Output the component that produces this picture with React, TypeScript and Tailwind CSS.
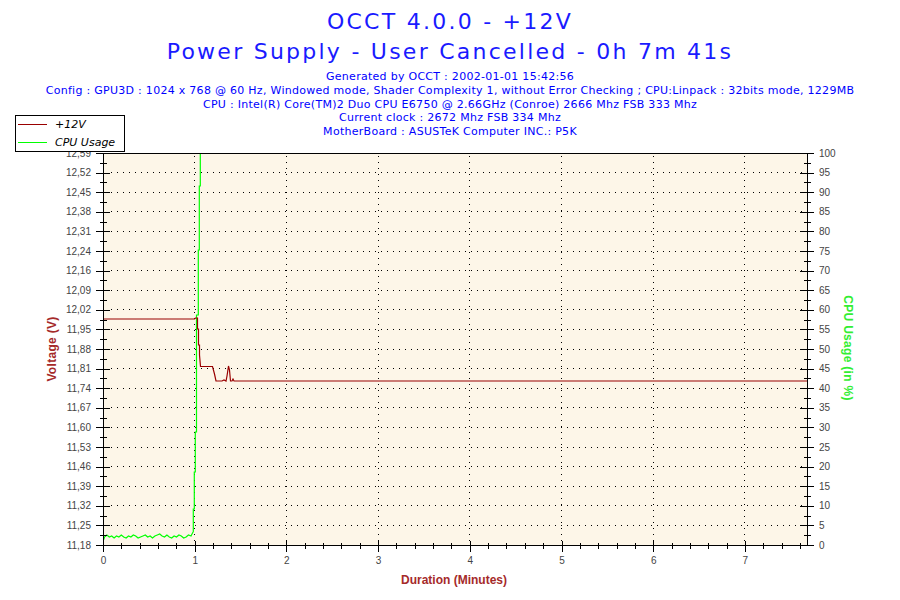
import React from "react";

// plot geometry (page pixels)
const X0 = 103;
const X1 = 807;
const Y0 = 545;
const Y1 = 153;
const MIN_PX = 91.7;
const STEP = 19.6;
const TOP = 143; // header height, svg starts here

const voltLabels = [
  "11,18", "11,25", "11,32", "11,39", "11,46", "11,53", "11,60", "11,67", "11,74", "11,81",
  "11,88", "11,95", "12,02", "12,09", "12,16", "12,24", "12,31", "12,38", "12,45", "12,52", "12,59",
];

const wiggle = [
  537, 535, 537, 536, 538, 536, 537, 535, 537, 538, 536, 537, 535, 536, 538, 537, 536, 535, 537, 536,
  538, 536, 535, 534, 536, 537, 535, 537, 538, 536, 537, 535, 536, 538, 537, 535,
];

const greenPts = (() => {
  const pts: [number, number][] = [[103.5, 540]];
  wiggle.forEach((y, i) => pts.push([104.5 + i * 2.4, y]));
  pts.push(
    [191, 536], [192.5, 533], [193.3, 531.7], [193.3, 509], [194.3, 509], [194.3, 472],
    [195.3, 472], [195.3, 432], [196.5, 432], [196.5, 315], [198.3, 315], [198.3, 250],
    [199.3, 250], [199.3, 186], [200.3, 186], [200.3, 153]
  );
  return pts;
})();

const redPts: [number, number][] = [
  [103, 319], [194.5, 319], [195.5, 318], [197.5, 318], [197.5, 329], [198.5, 329], [198.5, 345],
  [199.5, 345], [199.5, 355], [200.5, 366.5], [212.5, 366.5], [214.5, 374], [216, 381], [222, 381],
  [224, 380], [226, 381], [227, 376], [228.5, 366], [229.5, 370], [230.5, 381], [232, 381],
  [233, 379], [234, 381], [807, 381],
];

const toPath = (pts: [number, number][]) =>
  pts.map(([x, y], i) => `${i === 0 ? "M" : "L"}${x} ${y}`).join(" ");

const Chart = () => {
  const ks = Array.from({ length: 21 }, (_, k) => k);
  const mins = Array.from({ length: 8 }, (_, m) => m);
  const minorX = Array.from({ length: 39 }, (_, i) => i * 0.2).filter((v) => Math.abs(v - Math.round(v)) > 0.01);

  return (
    <svg width={900} height={600 - TOP} className="block" shapeRendering="crispEdges">
      <g transform={`translate(0,${-TOP})`}>
        <rect x={X0} y={Y1} width={X1 - X0} height={Y0 - Y1} fill="#fdf6e8" />

        {/* grid */}
        {ks.slice(1, 20).map((k) => (
          <line key={`h${k}`} x1={X0 + 8} x2={X1} y1={Y0 - k * STEP} y2={Y0 - k * STEP}
            stroke="#000" strokeDasharray="1 5" />
        ))}
        {mins.slice(1).map((m) => (
          <line key={`v${m}`} x1={X0 + m * MIN_PX} x2={X0 + m * MIN_PX} y1={Y1 + 3} y2={Y0}
            stroke="#000" strokeDasharray="1 5" />
        ))}

        {/* data */}
        <path d={toPath(greenPts)} fill="none" stroke="#00ff00" strokeWidth={1.2} shapeRendering="auto" />
        <path d={toPath(redPts)} fill="none" stroke="#990000" strokeWidth={1.2} shapeRendering="auto" />

        {/* frame */}
        <rect x={X0 + 0.5} y={Y1 + 0.5} width={X1 - X0} height={Y0 - Y1} fill="none" stroke="#000" />

        {/* y ticks */}
        {ks.map((k) => {
          const y = Y0 - k * STEP + 0.5;
          return (
            <g key={`t${k}`}>
              <line x1={96} x2={110} y1={y} y2={y} stroke="#000" />
              <line x1={X1 - 7} x2={X1 + 7} y1={y} y2={y} stroke="#000" />
              {k < 20 && (
                <>
                  <line x1={100} x2={107} y1={y - STEP / 2} y2={y - STEP / 2} stroke="#000" />
                  <line x1={X1 - 3} x2={X1 + 4} y1={y - STEP / 2} y2={y - STEP / 2} stroke="#000" />
                </>
              )}
              <text x={91} y={Y0 - k * STEP + 3.6} textAnchor="end" fill="#444"
                className="font-['Liberation_Sans',Arial,sans-serif] text-[10px]">
                {voltLabels[k]}
              </text>
              <text x={819} y={Y0 - k * STEP + 3.6} fill="#444"
                className="font-['Liberation_Sans',Arial,sans-serif] text-[10px]">
                {k * 5}
              </text>
            </g>
          );
        })}

        {/* x ticks */}
        {mins.map((m) => (
          <g key={`x${m}`}>
            <line x1={X0 + m * MIN_PX + 0.5} x2={X0 + m * MIN_PX + 0.5} y1={m === 0 ? Y0 : Y0 - 4} y2={Y0 + 7} stroke="#000" />
            <text x={X0 + m * MIN_PX + 0.5} y={564} textAnchor="middle" fill="#444"
              className="font-['Liberation_Sans',Arial,sans-serif] text-[10px]">
              {m}
            </text>
          </g>
        ))}
        {minorX.map((v) => (
          <line key={`mx${v}`} x1={X0 + v * MIN_PX + 0.5} x2={X0 + v * MIN_PX + 0.5} y1={Y0 - 2} y2={Y0 + 4} stroke="#000" />
        ))}

        {/* axis titles */}
        <text transform="translate(55.5,349) rotate(-90)" textAnchor="middle" fill="#a52a2a"
          className="font-['Liberation_Sans',Arial,sans-serif] text-[12px] font-bold tracking-[0.3px]">
          Voltage (V)
        </text>
        <text transform="translate(844,348) rotate(90)" textAnchor="middle" fill="#33ee33"
          className="font-['Liberation_Sans',Arial,sans-serif] text-[12px] font-bold tracking-[0.3px]">
          CPU Usage (in %)
        </text>
        <text x={454} y={584} textAnchor="middle" fill="#a52a2a"
          className="font-['Liberation_Sans',Arial,sans-serif] text-[12px] font-bold">
          Duration (Minutes)
        </text>
      </g>
    </svg>
  );
};

export default function App() {
  return (
    <div className="relative w-[900px] h-[600px] bg-white overflow-hidden font-['DejaVu_Sans',Verdana,sans-serif]">
      <header className="h-[143px] flex flex-col items-center pt-[7px]">
        <h1 className="text-[22px] leading-[30px] text-[#1a1aff] tracking-[2.25px]">OCCT 4.0.0 - +12V</h1>
        <h2 className="text-[22px] leading-[30px] text-[#1a1aff] tracking-[2.25px]">
          Power Supply - User Cancelled - 0h 7m 41s
        </h2>
        <div className="mt-[3px] flex flex-col items-center text-[11px] leading-[13.8px] text-[#0000ff] tracking-[0.28px]">
          <p>Generated by OCCT : 2002-01-01 15:42:56</p>
          <p>
            Config : GPU3D : 1024 x 768 @ 60 Hz, Windowed mode, Shader Complexity 1, without Error Checking ;
            CPU:Linpack : 32bits mode, 1229MB
          </p>
          <p>CPU : Intel(R) Core(TM)2 Duo CPU E6750 @ 2.66GHz (Conroe) 2666 Mhz FSB 333 Mhz</p>
          <p>Current clock : 2672 Mhz FSB 334 Mhz</p>
          <p>MotherBoard : ASUSTeK Computer INC.: P5K</p>
        </div>
      </header>

      <Chart />

      {/* legend */}
      <div className="absolute left-[15px] top-[115px] w-[110px] h-[37px] bg-white border border-black flex flex-col justify-center gap-[5px] text-[11px] italic leading-[13px]">
        <div className="flex items-center">
          <span className="ml-[2px] w-[29px] h-px bg-[#990000]" />
          <span className="ml-[8px]">+12V</span>
        </div>
        <div className="flex items-center">
          <span className="ml-[2px] w-[29px] h-px bg-[#00ff00]" />
          <span className="ml-[8px]">CPU Usage</span>
        </div>
      </div>
    </div>
  );
}
